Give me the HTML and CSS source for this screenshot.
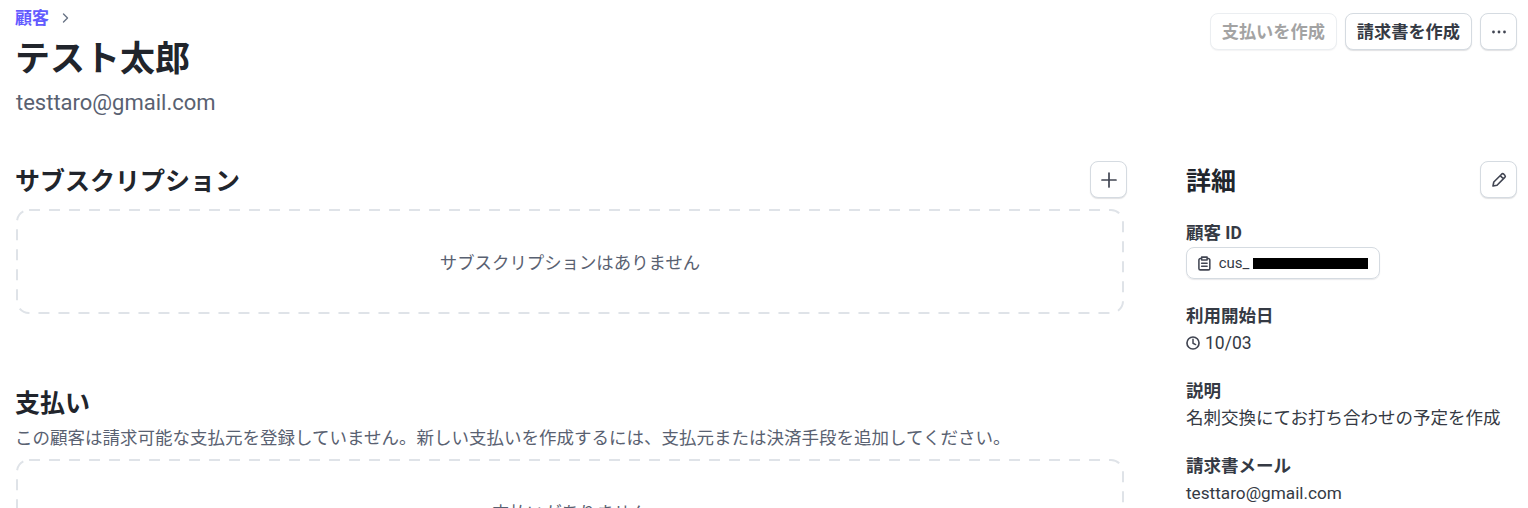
FILE: index.html
```html
<!DOCTYPE html>
<html lang="ja">
<head>
<meta charset="utf-8">
<title>テスト太郎</title>
<link rel="stylesheet" href="styles.css">
</head>
<body>
<div class="page">
  <header class="head">
    <div class="head-text">
      <nav class="crumb"><a class="crumb-link">顧客</a>
        <svg class="crumb-icon" viewBox="0 0 12 12" width="12" height="12"><path d="M4.5 2 8.5 6l-4 4" fill="none" stroke="#687385" stroke-width="1.4" stroke-linecap="round" stroke-linejoin="round"/></svg>
      </nav>
      <h1 class="title">テスト太郎</h1>
      <p class="email">testtaro@gmail.com</p>
    </div>
    <div class="actions">
      <button class="btn btn-disabled">支払いを作成</button>
      <button class="btn">請求書を作成</button>
      <button class="btn btn-icon" aria-label="その他">
        <svg viewBox="0 0 16 16" width="16" height="16"><circle cx="2.5" cy="8" r="1.4" fill="#414552"/><circle cx="8" cy="8" r="1.4" fill="#414552"/><circle cx="13.5" cy="8" r="1.4" fill="#414552"/></svg>
      </button>
    </div>
  </header>
  <div class="layout">
    <main class="main">
      <section class="sub">
        <div class="section-head">
          <h2 class="section-title">サブスクリプション</h2>
          <button class="btn btn-icon" aria-label="追加">
            <svg viewBox="0 0 16 16" width="16" height="16"><path d="M8 1v14M1 8h14" stroke="#414552" stroke-width="1.7" stroke-linecap="round"/></svg>
          </button>
        </div>
        <div class="empty"><svg class="dash"><rect class="dash-rect" rx="12" ry="12"/></svg>サブスクリプションはありません</div>
      </section>
      <section class="pay">
        <h2 class="section-title">支払い</h2>
        <p class="note">この顧客は請求可能な支払元を登録していません。新しい支払いを作成するには、支払元または決済手段を追加してください。</p>
        <div class="empty"><svg class="dash"><rect class="dash-rect" rx="12" ry="12"/></svg>支払いがありません</div>
      </section>
    </main>
    <aside class="side">
      <div class="section-head">
        <h2 class="section-title section-title-side">詳細</h2>
        <button class="btn btn-icon" aria-label="編集">
          <svg viewBox="0 0 16 16" width="16" height="16"><path d="M10.6 2.2a1.6 1.6 0 0 1 2.2 0l1 1a1.6 1.6 0 0 1 0 2.2L6 13.2l-4 .8.8-4zM9.2 3.6l3.2 3.2" fill="none" stroke="#414552" stroke-width="1.6" stroke-linejoin="round"/></svg>
        </button>
      </div>
      <dl class="details">
        <div class="item item-id">
          <dt class="label">顧客 ID</dt>
          <dd class="value">
            <span class="chip">
              <svg viewBox="0 0 14 16" width="13" height="15"><path d="M4 2.5H2.6A1.6 1.6 0 0 0 1 4.1v9.3A1.6 1.6 0 0 0 2.6 15h8.8a1.6 1.6 0 0 0 1.6-1.6V4.1a1.6 1.6 0 0 0-1.6-1.6H10M4 1h6v3.2H4zM4 7.8h6M4 11h6" fill="none" stroke="#414552" stroke-width="1.7" stroke-linejoin="round" stroke-linecap="round"/></svg>
              <span class="chip-text">cus_</span><span class="redact"></span>
            </span>
          </dd>
        </div>
        <div class="item item-date">
          <dt class="label">利用開始日</dt>
          <dd class="value value-date">
            <svg viewBox="0 0 16 16" width="14" height="14"><circle cx="8" cy="8" r="6.9" fill="none" stroke="#414552" stroke-width="1.9"/><path d="M8 3.8v4.5l3 1.5" fill="none" stroke="#414552" stroke-width="1.7" stroke-linecap="round" stroke-linejoin="round"/></svg>
            10/03
          </dd>
        </div>
        <div class="item">
          <dt class="label">説明</dt>
          <dd class="value">名刺交換にてお打ち合わせの予定を作成</dd>
        </div>
        <div class="item">
          <dt class="label">請求書メール</dt>
          <dd class="value value-latin">testtaro@gmail.com</dd>
        </div>
      </dl>
    </aside>
  </div>
</div>
</body>
</html>
```
FILE: styles.css
```css
* { box-sizing: border-box; }
html, body { margin: 0; height: 508px; overflow: hidden; background: #fff; }
body {
  font-family: Roboto, "Noto Sans CJK JP", sans-serif;
  color: #353a44;
  font-size: 17.5px;
}
h1, h2, p, dl, dd { margin: 0; }
.page { padding: 8px 11px 0 16px; height: 508px; overflow: hidden; }
.head { display: flex; justify-content: space-between; align-items: flex-start; }
.crumb { display: flex; align-items: center; gap: 10px; height: 20px; }
.crumb-link { color: #635bff; font-size: 17px; font-weight: 700; line-height: 20px; margin-left: -1px; }
.title { font-size: 35px; line-height: 44px; font-weight: 700; color: #21252c; margin-top: 10px; margin-left: -1px; }
.email { font-size: 22px; line-height: 28px; color: #596171; margin-top: 7px; }
.actions { display: flex; gap: 8px; margin-top: 5px; }
.btn {
  height: 37px;
  padding: 0 11px;
  display: inline-flex;
  align-items: center;
  justify-content: center;
  background: #fff;
  border: 1px solid #d5dbe1;
  border-radius: 8px;
  box-shadow: 0 1px 1px rgba(64, 68, 82, .16);
  font: 700 17.2px/20px Roboto, "Noto Sans CJK JP", sans-serif;
  color: #353a44;
}
.btn-disabled { color: #a3a3a3; border-color: #ebeef1; box-shadow: 0 1px 1px rgba(64, 68, 82, .06); }
.btn-icon { width: 37px; padding: 0; flex: none; }
.layout { display: grid; grid-template-columns: 1111px 331px; column-gap: 59px; margin-top: 44px; }
.section-head { display: flex; justify-content: space-between; align-items: center; height: 37px; }
.section-title { font-size: 25px; line-height: 32px; font-weight: 700; color: #21252c; margin-left: -1px; }
.section-head .section-title { margin-top: 4px; }
.section-title-side { margin-left: 0; }
.empty {
  position: relative;
  width: 1108px;
  height: 105px;
  display: flex;
  align-items: center;
  justify-content: center;
  font-size: 17.4px;
  color: #596171;
}
.dash { position: absolute; inset: 0; width: 100%; height: 100%; }
.dash-rect {
  x: 1px;
  y: 1px;
  width: calc(100% - 2px);
  height: calc(100% - 2px);
  fill: none;
  stroke: #dfe3e8;
  stroke-width: 2;
  stroke-dasharray: 11 9;
}
.sub .empty { margin-top: 11px; }
.pay { margin-top: 74px; }
.note { font-size: 17.5px; line-height: 24px; color: #596171; margin-top: 6px; margin-left: -1px; }
.pay .empty { margin-top: 9px; }
.details { margin-top: 23px; }
.item { margin-bottom: 24px; }
.label { font-size: 17.5px; line-height: 24px; font-weight: 700; color: #353a44; margin-bottom: 3px; }
.item-id { margin-bottom: 25px; }
.item-id .label { margin-bottom: 2px; }
.value { font-size: 17.5px; line-height: 24px; color: #353a44; }
.value-latin { font-size: 17.2px; }
.chip {
  display: inline-flex;
  align-items: center;
  width: 194px;
  height: 32px;
  padding: 0 11px;
  border: 1px solid #d5dbe1;
  border-radius: 8px;
  box-shadow: 0 1px 1px rgba(64, 68, 82, .12);
  font-size: 15px;
  line-height: 20px;
}
.chip-text { margin-left: 8px; }
.redact { width: 117px; height: 11px; margin-left: 4px; background: #000; }
.value-date { display: flex; align-items: center; gap: 5px; }
```
